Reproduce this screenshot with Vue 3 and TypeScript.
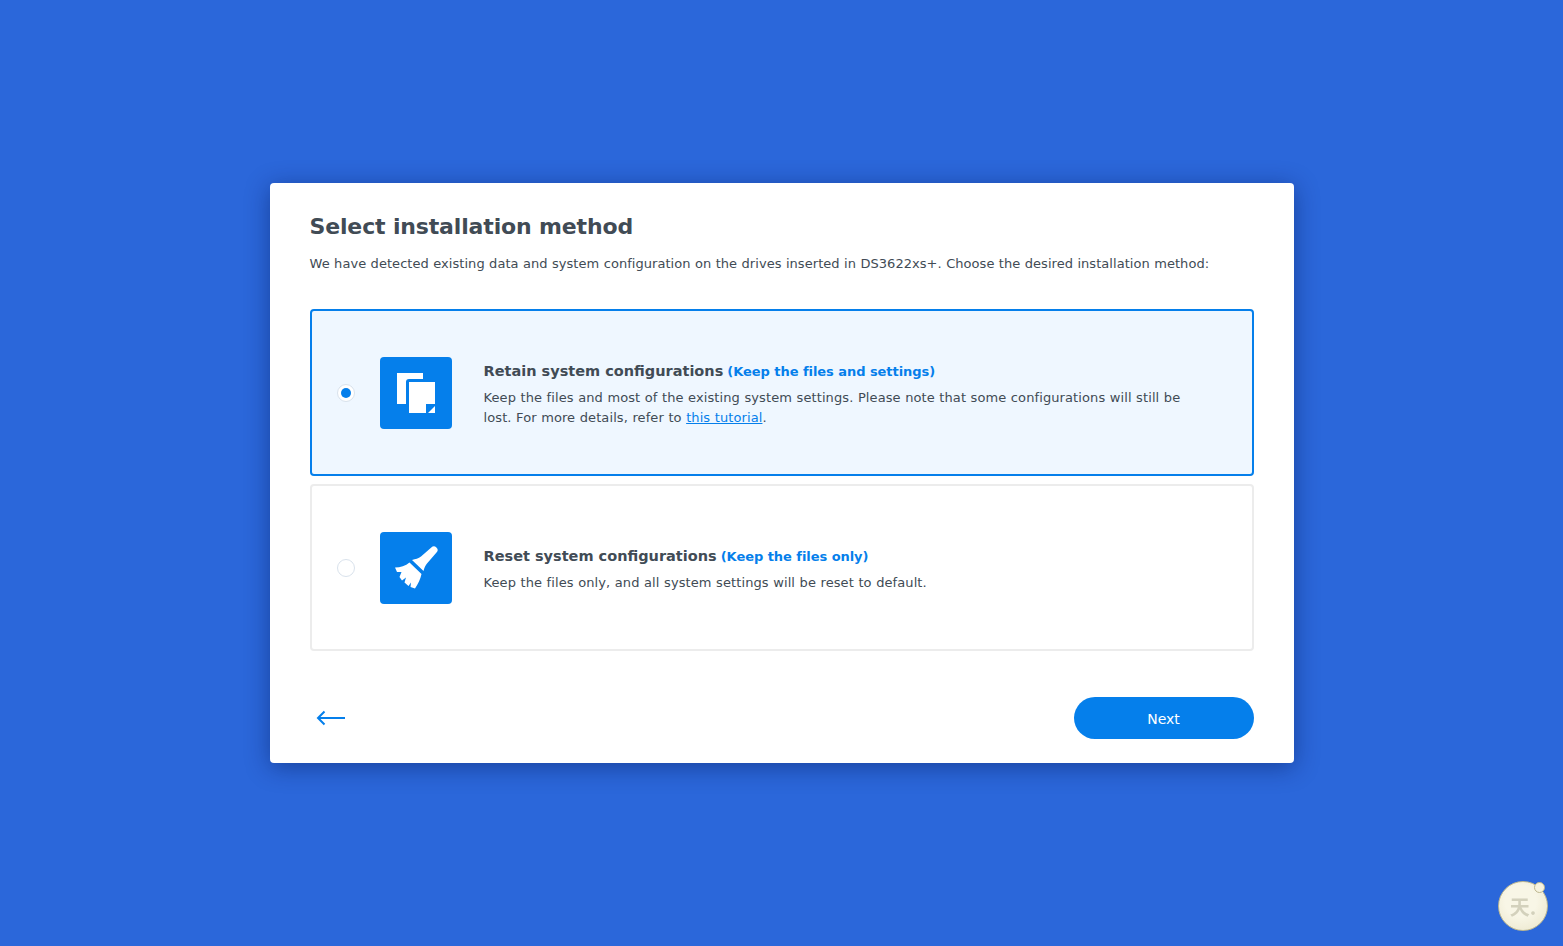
<script setup lang="ts">
import { ref } from 'vue';

const selected = ref<'retain' | 'reset'>('retain');
</script>

<template>
  <div class="page">
    <main class="dialog">
      <h1 class="title">Select installation method</h1>
      <p class="intro">We have detected existing data and system configuration on the drives inserted in DS3622xs+. Choose the desired installation method:</p>

      <div class="options">
        <div class="option" :class="{ 'is-selected': selected === 'retain' }" @click="selected = 'retain'">
          <span class="radio"></span>
          <span class="tile">
            <svg width="38" height="40" viewBox="0 0 38 40">
              <path d="M0 0h26v6H12a3 3 0 0 0-3 3v22H0z" fill="#fff" />
              <path d="M12 9h26v22h-9v9H12z" fill="#fff" />
              <path d="M38 33v7h-7z" fill="#fff" />
            </svg>
          </span>
          <div class="copy">
            <h2 class="opt-title">Retain system configurations <em>(Keep the files and settings)</em></h2>
            <p class="opt-text">Keep the files and most of the existing system settings. Please note that some configurations will still be lost. For more details, refer to <a href="#">this tutorial</a>.</p>
          </div>
        </div>

        <div class="option" :class="{ 'is-selected': selected === 'reset' }" @click="selected = 'reset'">
          <span class="radio"></span>
          <span class="tile">
            <svg width="44" height="44" viewBox="0 0 44 44">
              <path d="M37.300 1.500a3.600 3.600 0 0 1 5.200 5L33 17.500c-1.500 1.800-2.500 4-3.500 7.500L18 14c3.500-1 6.500-1.500 9-3.500z" fill="#fff" />
              <path d="M15.500 16.500L27.500 28c-1 5-3.500 10-6.500 14.500l-4.500-1.500.5-4.500-2.500 3.500-4-3.500 1.500-5-4 3-2.500-3.500 2-5-4.500 0-2-4.500c5.500 0 10.500-1.500 14.500-5z" fill="#fff" />
            </svg>
          </span>
          <div class="copy">
            <h2 class="opt-title">Reset system configurations <em>(Keep the files only)</em></h2>
            <p class="opt-text">Keep the files only, and all system settings will be reset to default.</p>
          </div>
        </div>
      </div>

      <footer class="actions">
        <button class="back" type="button" aria-label="Back">
          <svg width="30" height="16" viewBox="0 0 30 16" fill="none" stroke="#057feb" stroke-width="2">
            <path d="M29 8H2" />
            <path d="M8.500 1.500L2 8l6.500 6.500" />
          </svg>
        </button>
        <button class="next" type="button">Next</button>
      </footer>
    </main>

    <div class="floater">
      <span class="floater-mark">天.</span>
      <span class="floater-dot"></span>
    </div>
  </div>
</template>

<style>
html,
body {
  margin: 0;
  background: #2b67da;
}
</style>

<style scoped>
.page {
  min-height: 946px;
  display: flex;
  align-items: center;
  justify-content: center;
  background: #2b67da;
  font-family: "DejaVu Sans", sans-serif;
  color: #414b55;
}
.dialog {
  box-sizing: border-box;
  width: 1024px;
  height: 580px;
  padding: 31px 40px 24px;
  display: flex;
  flex-direction: column;
  background: #fff;
  border-radius: 4px;
  box-shadow: 0 4px 24px rgba(0, 20, 80, 0.45);
}
.title {
  margin: 0;
  font-size: 22px;
  line-height: 26px;
  font-weight: 700;
  letter-spacing: -0.15px;
}
.intro {
  margin: 14px 0 0;
  font-size: 13px;
  line-height: 20px;
  letter-spacing: 0.05px;
  word-spacing: 0.22px;
}
.options {
  margin-top: 35px;
  display: flex;
  flex-direction: column;
  gap: 8px;
}
.option {
  box-sizing: border-box;
  height: 167px;
  padding: 0 50px 0 25px;
  display: flex;
  align-items: center;
  border: 2px solid #ececec;
  border-radius: 4px;
  cursor: pointer;
}
.option.is-selected {
  background: #eff7ff;
  border-color: #057feb;
}
.radio {
  box-sizing: border-box;
  flex: none;
  width: 18px;
  height: 18px;
  border: 1px solid #d9e2ec;
  border-radius: 50%;
  background: #fff;
  display: flex;
  align-items: center;
  justify-content: center;
}
.is-selected .radio::after {
  content: "";
  width: 10px;
  height: 10px;
  border-radius: 50%;
  background: #057feb;
}
.tile {
  flex: none;
  width: 72px;
  height: 72px;
  margin-left: 25px;
  border-radius: 4px;
  background: #057feb;
  display: flex;
  align-items: center;
  justify-content: center;
}
.copy {
  margin-left: 32px;
  padding-top: 4px;
}
.opt-title {
  margin: 0;
  font-size: 14.500px;
  line-height: 20px;
  font-weight: 700;
}
.opt-title em {
  margin-left: -1px;
  font-style: normal;
  font-size: 13px;
  letter-spacing: -0.05px;
  color: #057feb;
}
.opt-text {
  margin: 6px 0 0;
  font-size: 13px;
  line-height: 20px;
  letter-spacing: 0.1px;
  word-spacing: 0.25px;
}
.opt-text a {
  color: #057feb;
}
.actions {
  margin-top: auto;
  display: flex;
  align-items: center;
  justify-content: space-between;
}
.back {
  padding: 0 0 0 6px;
  border: 0;
  background: none;
  display: flex;
  cursor: pointer;
}
.next {
  width: 180px;
  height: 42px;
  padding-top: 2px;
  border: 0;
  border-radius: 21px;
  background: #057feb;
  color: #fff;
  font: 14px "DejaVu Sans", sans-serif;
  cursor: pointer;
}
.floater {
  position: fixed;
  right: 15px;
  bottom: 15px;
  box-sizing: border-box;
  width: 50px;
  height: 50px;
  border: 1px solid #bdb78f;
  border-radius: 50%;
  background: radial-gradient(circle at 45% 40%, #f8f6e6 40%, #e9e4c8);
  display: flex;
  align-items: center;
  justify-content: center;
}
.floater-mark {
  font-family: "Noto Sans CJK SC", sans-serif;
  font-size: 20px;
  font-weight: 700;
  color: #d3d1bc;
}
.floater-dot {
  position: absolute;
  top: 0;
  right: 2px;
  box-sizing: border-box;
  width: 11px;
  height: 11px;
  border: 1px solid #bdb78f;
  border-radius: 50%;
  background: #f6f3df;
}
</style>
